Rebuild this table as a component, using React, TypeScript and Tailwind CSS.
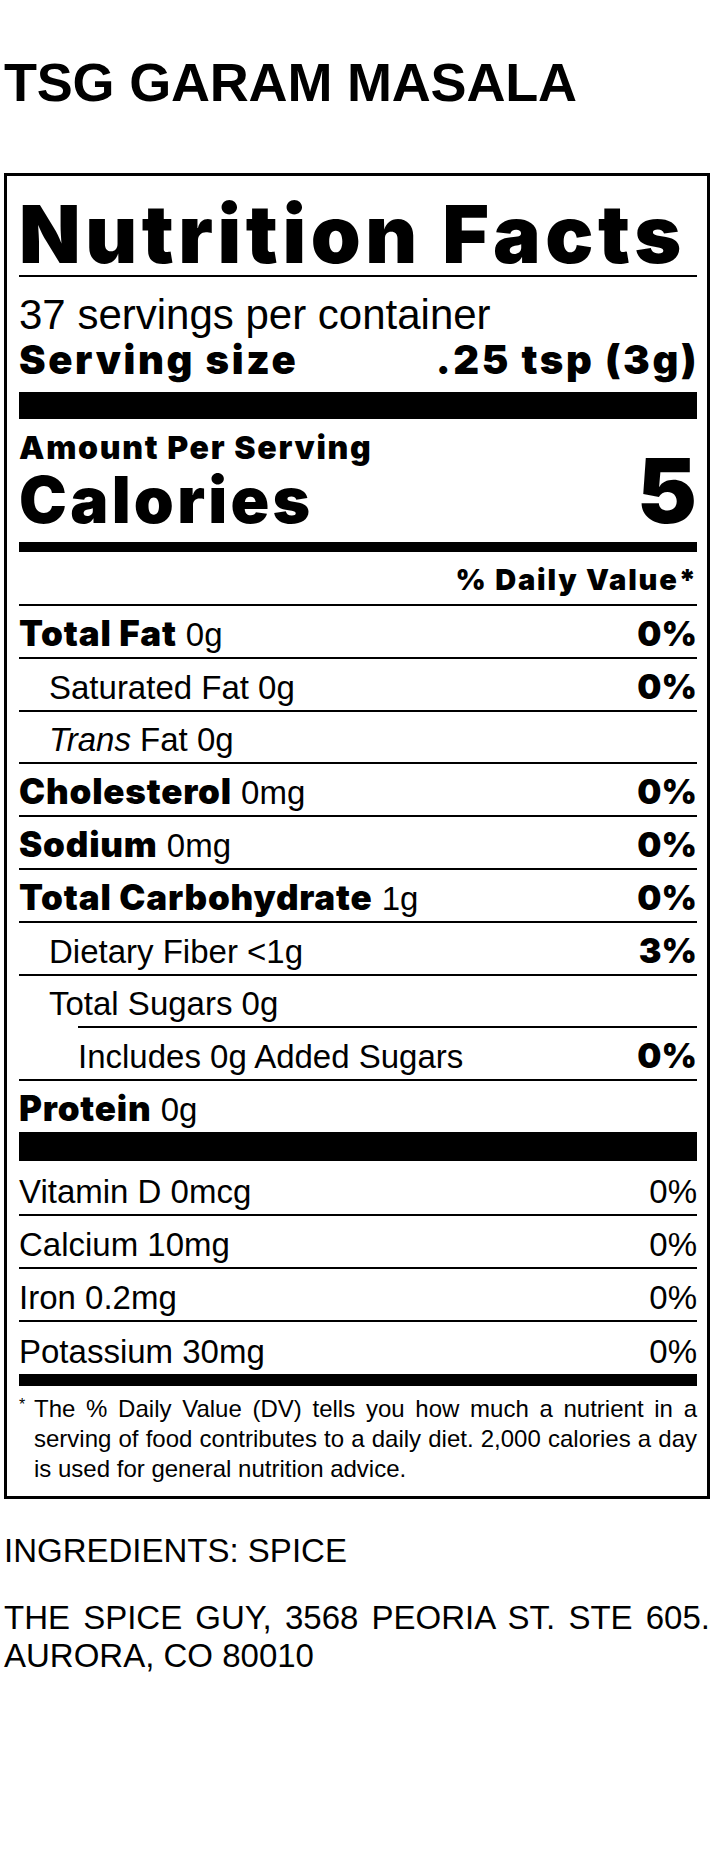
import React from "react";

const reg = "font-['Liberation_Sans',Arial,sans-serif]";
const heavy = "font-['Inter','Liberation_Sans',sans-serif] font-black";

type RowProps = {
  left: React.ReactNode;
  right?: React.ReactNode;
  className?: string;
  h?: string;
};

const Row = ({ left, right, className = "", h = "h-[52.8px]" }: RowProps) => (
  <div className={`flex flex-col justify-end pb-[6px] ${h} ${className}`}>
    <div className="flex items-baseline justify-between text-[33px] leading-none">
      <span>{left}</span>
      <span>{right}</span>
    </div>
  </div>
);

// bold label part of a row
const B = ({ children }: { children: React.ReactNode }) => (
  <span className={`${heavy} text-[35px] tracking-[0.8px]`}>{children}</span>
);

// bold percent value
const P = ({ children }: { children: React.ReactNode }) => (
  <span className={`${heavy} text-[34px]`}>{children}</span>
);

export default function App() {
  return (
    <div className={`w-[720px] h-[1860px] bg-white text-black pl-[4px] pr-[10px] ${reg}`}>
      <h1 className="pt-[55px] text-[54px] leading-none font-bold tracking-[-0.2px]">
        TSG GARAM MASALA
      </h1>

      <div className="mt-[64px] border-[3px] border-black pl-[12px] pr-[10px]">
        {/* header */}
        <div className="flex h-[101px] items-end border-b-2 border-black pb-[1px]">
          <span className={`${heavy} text-[80px] leading-none tracking-[4.6px]`}>Nutrition Facts</span>
        </div>
        <div className="pt-[17px] text-[42px] leading-none">37 servings per container</div>
        <div className={`mt-[4px] flex items-baseline justify-between text-[40px] leading-none tracking-[2.6px] ${heavy}`}>
          <span>Serving size</span>
          <span className="mr-[-2px]">.25 tsp (3g)</span>
        </div>
        <div className="mt-[12px] h-[27px] bg-black" />

        {/* calories */}
        <div className="mt-[13px] flex items-end justify-between">
          <div className="flex flex-col">
            <span className={`${heavy} text-[32px] leading-none tracking-[1.7px]`}>Amount Per Serving</span>
            <span className={`${heavy} text-[64px] leading-none mt-[4px] tracking-[3.3px]`}>Calories</span>
          </div>
          <span className={`${heavy} text-[90px] leading-none mb-[-4px]`}>5</span>
        </div>
        <div className="mt-[10px] h-[10px] bg-black" />
        <div className="flex h-[52px] items-end justify-end pb-[10px]">
          <span className={`${heavy} text-[29px] leading-none tracking-[1.8px] mr-[-1px]`}>% Daily Value*</span>
        </div>

        {/* nutrients */}
        <div className="border-t-2 border-black">
          <Row left={<><B>Total Fat</B> 0g</>} right={<P>0%</P>} h="h-[50.8px]" />
          <Row className="border-t-2 border-black pl-[30px]" left="Saturated Fat 0g" right={<P>0%</P>} />
          <Row className="border-t-2 border-black pl-[30px]" left={<><i>Trans</i> Fat 0g</>} />
          <Row className="border-t-2 border-black" left={<><B>Cholesterol</B> 0mg</>} right={<P>0%</P>} />
          <Row className="border-t-2 border-black" left={<><B>Sodium</B> 0mg</>} right={<P>0%</P>} />
          <Row className="border-t-2 border-black" left={<><B>Total Carbohydrate</B> 1g</>} right={<P>0%</P>} />
          <Row className="border-t-2 border-black pl-[30px]" left="Dietary Fiber <1g" right={<P>3%</P>} />
          <Row className="border-t-2 border-black pl-[30px]" left="Total Sugars 0g" />
          <Row className="border-t-2 border-black ml-[59px]" left="Includes 0g Added Sugars" right={<P>0%</P>} />
          <Row className="border-t-2 border-black" left={<><B>Protein</B> 0g</>} />
        </div>
        <div className="h-[29px] bg-black" />

        {/* vitamins */}
        <Row left="Vitamin D 0mcg" right="0%" h="h-[53px]" />
        <Row className="border-t-2 border-black" left="Calcium 10mg" right="0%" h="h-[53px]" />
        <Row className="border-t-2 border-black" left="Iron 0.2mg" right="0%" h="h-[53px]" />
        <Row className="border-t-2 border-black" left="Potassium 30mg" right="0%" h="h-[54px]" />
        <div className="h-[12px] bg-black" />

        {/* footnote */}
        <div className="flex pt-[8px] pb-[12px] text-[24px] leading-[30px]">
          <span className="w-[15px] shrink-0 text-[16px] leading-[22px]">*</span>
          <p className="flex-1 text-justify">
            The % Daily Value (DV) tells you how much a nutrient in a serving of food contributes to a
            daily diet. 2,000 calories a day is used for general nutrition advice.
          </p>
        </div>
      </div>

      <p className="mt-[35px] text-[33px] leading-none">INGREDIENTS: SPICE</p>
      <p className="mt-[32px] text-[33px] leading-[38px] text-justify">
        THE SPICE GUY, 3568 PEORIA ST. STE 605. AURORA, CO 80010
      </p>
    </div>
  );
}
